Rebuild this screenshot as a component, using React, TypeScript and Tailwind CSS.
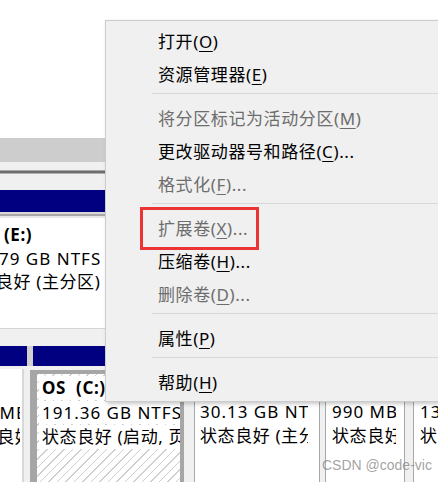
import React from "react";

const U = ({ c }: { c: string }) => <span className="underline underline-offset-[3px] decoration-1">{c}</span>;

type Item = { pre: string; key: string; post: string; disabled?: boolean } | "sep";

const items: Item[] = [
  { pre: "打开(", key: "O", post: ")" },
  { pre: "资源管理器(", key: "E", post: ")" },
  "sep",
  { pre: "将分区标记为活动分区(", key: "M", post: ")", disabled: true },
  { pre: "更改驱动器号和路径(", key: "C", post: ")..." },
  { pre: "格式化(", key: "F", post: ")...", disabled: true },
  "sep",
  { pre: "扩展卷(", key: "X", post: ")...", disabled: true },
  { pre: "压缩卷(", key: "H", post: ")..." },
  { pre: "删除卷(", key: "D", post: ")...", disabled: true },
  "sep",
  { pre: "属性(", key: "P", post: ")" },
  "sep",
  { pre: "帮助(", key: "H", post: ")" },
];

const hatch =
  "bg-[repeating-linear-gradient(135deg,#cfcfcf_0px,#cfcfcf_1px,#ffffff_1px,#ffffff_6px)]";

export default function App() {
  return (
    <div className="relative w-[438px] h-[484px] overflow-hidden bg-white font-['Noto_Sans','Noto_Sans_CJK_SC',sans-serif] text-[17px] tracking-[0.6px] text-black">
      {/* background window */}
      <div className="flex flex-col w-full">
        <div className="h-[138px] bg-white" />
        <div className="h-[24px] bg-[#cdcdcd]" />
        <div className="h-[8px] bg-[#f0f0f0]" />
        <div className="h-px bg-[#a8a8a8]" />
        <div className="h-[2px] bg-[#6e6e6e]" />
        <div className="h-px bg-[#b0b0b0]" />
        <div className="h-[16px] bg-[#f0f0f0]" />
        <div className="h-[22px] bg-[#000080]" />
        <div className="h-[2px] bg-[#d8d8d8]" />
        <div className="h-[2px] bg-[#a8a8a8]" />
        <div className="h-[2px] bg-[#e8e8e8]" />
        {/* E panel */}
        <div className="h-[110px] bg-white overflow-hidden leading-[23.5px] whitespace-nowrap pt-[5px]">
          <div className="font-bold ml-[4px]">(E:)</div>
          <div className="ml-[-1px] tracking-[1px]">79 GB NTFS</div>
          <div className="ml-[-4px]">良好 (主分区)</div>
        </div>
        <div className="h-px bg-[#d4d4d4]" />
        <div className="h-[17px] bg-[#f0f0f0]" />
        {/* navy bars */}
        <div className="flex h-[20px]">
          <div className="w-[27px] bg-[#000080]" />
          <div className="w-[6px] bg-[#d0d0d0]" />
          <div className="flex-1 bg-[#000080]" />
        </div>
        {/* partitions */}
        <div className="flex h-[116px] bg-[#f0f0f0] leading-[23.5px] whitespace-nowrap">
          <div className="w-[24px] mt-[3px] bg-white border-r-2 border-[#d8d8d8] pt-[32px]">
            <div className="w-[20px] overflow-hidden">
              <div className="ml-[-38px] tracking-[1px]">260 MB</div>
              <div className="ml-[-38px]">状态良好</div>
            </div>
          </div>
          <div className="w-[6px]" />
          <div className={`w-[154px] mt-[4px] border-l-[7px] border-t-[4px] border-r-[4px] border-[#a6a6a6] ${hatch} pt-[2px]`}>
            <div className="bg-white ml-[2px] pl-[3px] overflow-hidden font-bold">OS&nbsp;&nbsp;(C:)</div>
            <div className="bg-white ml-[2px] pl-[3px] mt-px overflow-hidden tracking-[1px]">191.36 GB NTFS</div>
            <div className="bg-white ml-[2px] pl-[3px] mt-[1px] overflow-hidden">状态良好 (启动, 页面文件)</div>
          </div>
          <div className="w-[10px]" />
          <div className="w-[126px] mt-[3px] bg-white border-x border-[#a8a8a8] pl-[5px] pt-[31px]">
            <div className="w-[108px] overflow-hidden">
              <div className="tracking-[1px]">30.13 GB NTFS</div>
              <div>状态良好 (主分区)</div>
            </div>
          </div>
          <div className="w-[5px]" />
          <div className="w-[80px] mt-[3px] bg-white border-x border-[#a8a8a8] pl-[6px] pt-[31px]">
            <div className="w-[64px] overflow-hidden">
              <div className="tracking-[1px]">990 MB</div>
              <div>状态良好</div>
            </div>
          </div>
          <div className="w-[8px]" />
          <div className="flex-1 mt-[3px] bg-white border-l border-[#a8a8a8] pl-[6px] pt-[31px] overflow-hidden">
            <div className="tracking-[1px]">13.28 GB</div>
            <div>状态良好</div>
          </div>
        </div>
      </div>

      {/* context menu */}
      <div className="absolute left-[105px] top-[20px] w-[345px] bg-[#f0f0f0] border border-[#cccccc] shadow-[2px_2px_4px_rgba(0,0,0,0.22)] pt-[4px] pb-[2px]">
        {items.map((it, i) =>
          it === "sep" ? (
            <div key={i} className="h-[11px] pt-[2px]">
              <div className="ml-[46px] h-px bg-[#d7d7d7]" />
            </div>
          ) : (
            <div
              key={i}
              className={`h-[33px] flex items-center pl-[52px] whitespace-nowrap ${it.disabled ? "text-[#6d6d6d]" : "text-black"}`}
            >
              <span>
                {it.pre}
                <U c={it.key} />
                {it.post}
              </span>
            </div>
          )
        )}
      </div>

      {/* red highlight box */}
      <div className="absolute left-[140px] top-[207px] w-[119px] h-[43px] border-[3px] border-[#ec3434]" />

      {/* watermark */}
      <div className="absolute left-[322px] top-[456px] text-[14px] leading-[18px] tracking-normal text-[#8a8a8a]/80 font-['Liberation_Sans',sans-serif]">
        CSDN @code-vic
      </div>
    </div>
  );
}
